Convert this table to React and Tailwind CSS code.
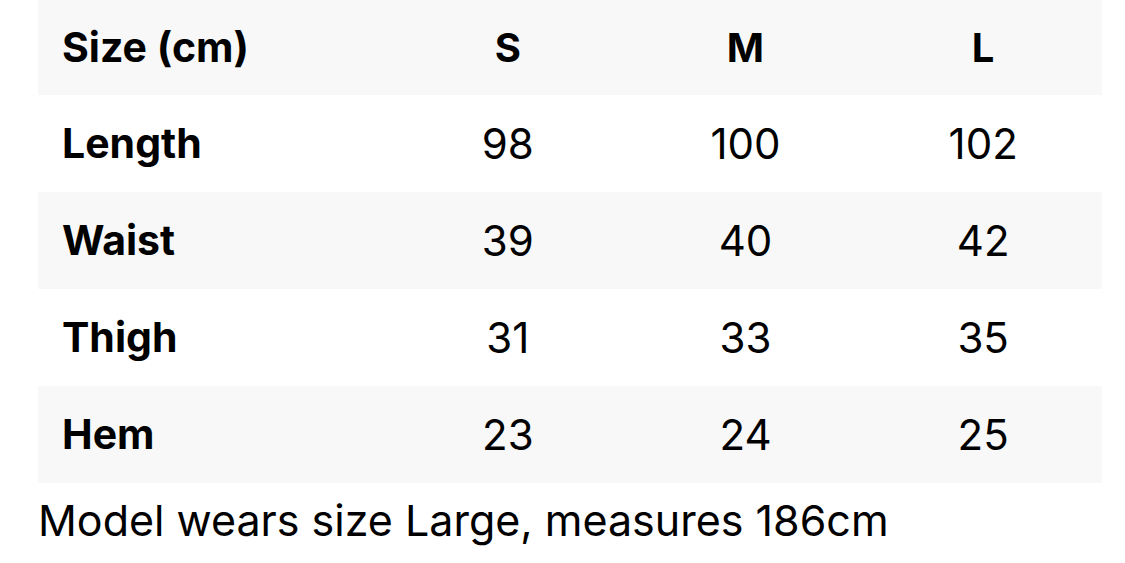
import React from "react";

const rows = [
  { label: "Length", values: ["98", "100", "102"] },
  { label: "Waist", values: ["39", "40", "42"] },
  { label: "Thigh", values: ["31", "33", "35"] },
  { label: "Hem", values: ["23", "24", "25"] },
];

const Row = ({ label, values, shaded, head }) => (
  <div
    className={`grid grid-cols-[351px_1fr_1fr_1fr] items-center ${head ? "h-[95px]" : "h-[97px]"} ${shaded ? "bg-[#f8f8f8]" : "bg-white"}`}
  >
    <div className="pl-6 text-[41px] font-bold">{label}</div>
    {values.map((v) => (
      <div
        key={v}
        className={`text-center ${head ? "text-[40px] font-bold" : "text-[42px] font-normal"}`}
      >
        {v}
      </div>
    ))}
  </div>
);

export default function App() {
  return (
    <div className="h-[563px] w-[1125px] bg-white font-['Inter',sans-serif] text-black">
      <div className="ml-[38px] w-[1064px]">
        <Row label="Size (cm)" values={["S", "M", "L"]} shaded head />
        {rows.map((r, i) => (
          <Row key={r.label} label={r.label} values={r.values} shaded={i % 2 === 1} />
        ))}
        <div className="pt-[16px] text-[43px] leading-none">
          Model wears size Large, measures 186cm
        </div>
      </div>
    </div>
  );
}
